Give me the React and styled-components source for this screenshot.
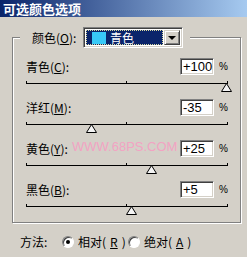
import React from 'react';
import styled, { createGlobalStyle } from 'styled-components';

const GlobalStyle = createGlobalStyle`
  html, body {
    margin: 0;
    padding: 0;
    background: #d4d0c8;
  }
  body {
    font-family: "Noto Sans CJK SC", "Liberation Sans", sans-serif;
    font-size: 12px;
    color: #000;
  }
`

const Window = styled.div`
  width: 247px;
  height: 257px;
  background: #d4d0c8;
  overflow: hidden;
  display: flex;
  flex-direction: column;
`

const TitleBar = styled.div`
  flex: none;
  height: 17px;
  padding-left: 3px;
  background: linear-gradient(to right, #0a246a, #a6caf0);
  color: #fff;
  font-weight: bold;
  font-size: 13px;
  line-height: 17px;
`

const Body = styled.div`
  padding: 10px 0 0 12px;
`

const Group = styled.fieldset`
  margin: 0;
  padding: 0;
  width: 229px;
  height: 196px;
  box-sizing: border-box;
  min-width: 0;
  border: 1px solid #808080;
  box-shadow: inset 1px 1px 0 #fff, 1px 1px 0 #fff;
`

const Legend = styled.legend`
  margin-left: 7px;
  padding: 0 7px 0 12px;
  background: #d4d0c8;
`

const LegendInner = styled.div`
  display: flex;
  align-items: center;
  height: 21px;
`

const LegendLabel = styled.span`
  width: 51px;
  line-height: 14px;
`

const Combo = styled.div`
  display: flex;
  width: 100px;
  height: 21px;
  box-sizing: border-box;
  border: 1px solid;
  border-color: #808080 #fff #fff #808080;
  box-shadow: inset 1px 1px 0 #404040, inset -1px -1px 0 #d4d0c8;
  background: #fff;
  padding: 2px;
`

const Selected = styled.div`
  flex: 1;
  display: flex;
  align-items: center;
  padding-left: 5px;
  margin-right: 1px;
  background: #0a246a;
  border: 1px dotted #d8d8a0;
  color: #fff;
  font-size: 12px;
  line-height: 14px;
`

const Swatch = styled.span`
  width: 14px;
  height: 12px;
  margin-right: 4px;
  background: ${p => p.$color};
`

const DropButton = styled.div`
  width: 16px;
  box-sizing: border-box;
  display: flex;
  align-items: center;
  justify-content: center;
  background: #d4d0c8;
  border: 1px solid;
  border-color: #d4d0c8 #404040 #404040 #d4d0c8;
  box-shadow: inset 1px 1px 0 #fff, inset -1px -1px 0 #808080;

  &::after {
    content: "";
    border-left: 4px solid transparent;
    border-right: 4px solid transparent;
    border-top: 4px solid #000;
  }
`

const Rows = styled.div`
  padding: 10px 13px 0 13px;
`

const Row = styled.div`
  position: relative;
  height: 41px;
`

const Header = styled.div`
  display: flex;
  align-items: center;
  height: 17px;
`

const Label = styled.span`
  flex: 1;
  line-height: 14px;
`

const ValueBox = styled.div`
  width: 34px;
  height: 17px;
  box-sizing: border-box;
  border: 1px solid;
  border-color: #808080 #fff #fff #808080;
  box-shadow: inset 1px 1px 0 #404040, inset -1px -1px 0 #d4d0c8;
  background: #fff;
  padding-left: 2px;
  font-family: "Liberation Sans", Arial, sans-serif;
  font-size: 13px;
  line-height: 15px;
`

const Percent = styled.span`
  margin-left: 5px;
  width: 8px;
  font-family: "Liberation Sans", Arial, sans-serif;
  font-size: 10px;
  line-height: 12px;
`

const Slider = styled.div`
  position: relative;
  height: 24px;
`

const Track = styled.div`
  position: relative;
  top: 6px;
  width: 202px;
  height: 3px;

  &::before {
    content: "";
    position: absolute;
    left: 0;
    right: 0;
    bottom: 0;
    height: 3px;
    border-left: 1px solid #000;
    border-right: 1px solid #000;
    border-bottom: 1px solid #000;
    box-sizing: border-box;
  }

  &::after {
    content: "";
    position: absolute;
    left: 100px;
    top: 0;
    width: 1px;
    height: 3px;
    background: #000;
  }
`

const Thumb = styled.svg`
  position: absolute;
  top: 8px;
  left: ${p => 95 + p.$value}px;
`

const Watermark = styled.span`
  position: absolute;
  left: 46px;
  top: -1px;
  font-family: "Liberation Sans", Arial, sans-serif;
  font-size: 13px;
  line-height: 15px;
  color: #f2a3c3;
  pointer-events: none;
`

const Methods = styled.div`
  display: flex;
  align-items: center;
  height: 18px;
  margin-top: 10px;
  padding-left: 8px;
`

const MethodLabel = styled.span`
  width: 42px;
  line-height: 14px;
`

const Option = styled.label`
  display: flex;
  align-items: center;
  gap: 4px;
  width: ${p => p.$width}px;
  line-height: 14px;
`

const Radio = styled.span`
  position: relative;
  width: 12px;
  height: 12px;
  box-sizing: border-box;
  border-radius: 50%;
  border: 1px solid;
  border-color: #808080 #fff #fff #808080;
  box-shadow: inset 1px 1px 0 #404040;
  background: #fff;

  &::after {
    content: "";
    display: ${p => (p.$checked ? 'block' : 'none')};
    position: absolute;
    left: 3px;
    top: 3px;
    width: 4px;
    height: 4px;
    border-radius: 50%;
    background: #000;
  }
`

const channels = [
  { name: '青色', key: 'C', value: 100 },
  { name: '洋红', key: 'M', value: -35 },
  { name: '黄色', key: 'Y', value: 25, mark: true },
  { name: '黑色', key: 'B', value: 5 },
]

function format(v) {
  return v > 0 ? `+${v}` : `${v}`
}

function ChannelRow({ name, accel, value, mark }) {
  return (
    <Row>
      <Header>
        <Label>{name}(<u>{accel}</u>):</Label>
        <ValueBox>{format(value)}</ValueBox>
        <Percent>%</Percent>
      </Header>
      <Slider>
        <Track />
        <Thumb $value={value} width="11" height="9" viewBox="0 0 11 9">
          <polygon points="5.5,0.5 10.5,8.5 0.5,8.5" fill="#f4f4f4" stroke="#000" strokeWidth="1" />
        </Thumb>
      </Slider>
      {mark && <Watermark>WWW.68PS.COM</Watermark>}
    </Row>
  )
}

export default function App() {
  return (
    <Window>
      <GlobalStyle />
      <TitleBar>可选颜色选项</TitleBar>
      <Body>
        <Group>
          <Legend>
            <LegendInner>
              <LegendLabel>颜色(<u>O</u>):</LegendLabel>
              <Combo>
                <Selected>
                  <Swatch $color="#38c9f7" />
                  青色
                </Selected>
                <DropButton />
              </Combo>
            </LegendInner>
          </Legend>
          <Rows>
            {channels.map(c => (
              <ChannelRow key={c.key} name={c.name} accel={c.key} value={c.value} mark={c.mark} />
            ))}
          </Rows>
        </Group>
        <Methods>
          <MethodLabel>方法:</MethodLabel>
          <Option $width={66}>
            <Radio $checked />
            相对(<u>R</u>)
          </Option>
          <Option $width={70}>
            <Radio />
            绝对(<u>A</u>)
          </Option>
        </Methods>
      </Body>
    </Window>
  )
}
